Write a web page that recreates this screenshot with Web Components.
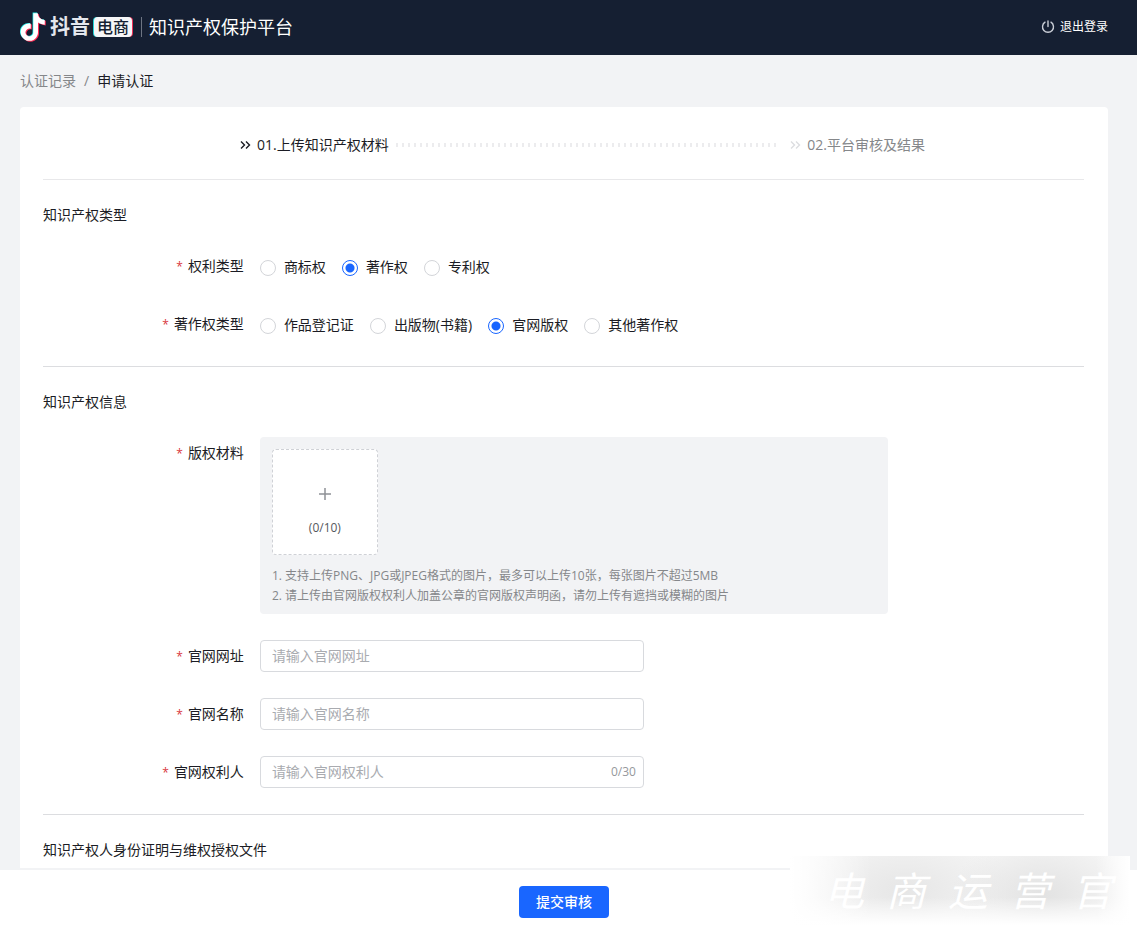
<!DOCTYPE html>
<html lang="zh-CN">
<head>
<meta charset="utf-8">
<meta name="viewport" content="width=device-width, initial-scale=1">
<title>知识产权保护平台</title>
<style>
  html, body { margin: 0; height: 100%; }
  body {
    font: 14px/22px "Open Sans", "Noto Sans CJK SC", sans-serif;
    color: #1b1c24;
    background: #f2f3f5;
  }
</style>
</head>
<body>
<ip-app>
  <ip-header slot="header"></ip-header>
  <ip-breadcrumb></ip-breadcrumb>
  <ip-card>
    <ip-steps></ip-steps>
    <ip-section heading="知识产权类型">
      <ip-radio-field label="权利类型" name="right" options="商标权,著作权,专利权" selected="1"></ip-radio-field>
      <ip-radio-field label="著作权类型" name="copyright" options="作品登记证,出版物(书籍),官网版权,其他著作权" selected="2"></ip-radio-field>
    </ip-section>
    <ip-section heading="知识产权信息">
      <ip-upload-field label="版权材料" count="(0/10)">
        <div>1. 支持上传PNG、JPG或JPEG格式的图片，最多可以上传10张，每张图片不超过5MB</div>
        <div>2. 请上传由官网版权权利人加盖公章的官网版权声明函，请勿上传有遮挡或模糊的图片</div>
      </ip-upload-field>
      <ip-text-field label="官网网址" placeholder="请输入官网网址"></ip-text-field>
      <ip-text-field label="官网名称" placeholder="请输入官网名称"></ip-text-field>
      <ip-text-field label="官网权利人" placeholder="请输入官网权利人" count="0/30"></ip-text-field>
    </ip-section>
    <ip-section heading="知识产权人身份证明与维权授权文件"></ip-section>
  </ip-card>
  <ip-submit-bar slot="footer">提交审核</ip-submit-bar>
  <ip-watermark slot="overlay" text="电商运营官"></ip-watermark>
</ip-app>

<script>
class Base extends HTMLElement {
  connectedCallback() {
    if (this.shadowRoot) return;
    this.attachShadow({ mode: "open" }).innerHTML =
      `<style>*{box-sizing:border-box}:host{display:block}</style>` + this.render();
  }
  attr(name) { return this.getAttribute(name) || ""; }
}

/* Row with a right-aligned label column and a control column. */
const fieldStyle = `
  .row { display: grid; grid-template-columns: calc(100% * 5 / 24) 1fr; align-items: start; }
  .label { padding-right: 16px; text-align: right; line-height: 32px; }
  .label::before { content: "*"; color: #d9363e; font-size: 12px; line-height: 1; margin-right: 5px; }
`;

customElements.define("ip-app", class extends Base {
  render() {
    return `<style>
      :host { display: flex; flex-direction: column; height: 100vh; position: relative; }
      main { flex: 1; min-height: 0; overflow: hidden auto; scrollbar-width: none; padding: 15px 29px 0 20px; }
    </style>
    <slot name="header"></slot><main><slot></slot></main><slot name="footer"></slot><slot name="overlay"></slot>`;
  }
});

customElements.define("ip-header", class extends Base {
  render() {
    const note = "M12.525.02c1.31-.02 2.61-.01 3.91-.02.08 1.53.63 3.09 1.75 4.17 1.12 1.11 2.7 1.62 4.24 1.79v4.03c-1.44-.05-2.89-.35-4.2-.97-.57-.26-1.1-.59-1.62-.93-.01 2.92.01 5.84-.02 8.75-.08 1.4-.54 2.79-1.35 3.94-1.31 1.92-3.58 3.17-5.91 3.21-1.43.08-2.86-.31-4.08-1.03-2.02-1.19-3.44-3.37-3.65-5.71-.02-.5-.03-1-.01-1.49.18-1.9 1.12-3.72 2.58-4.96 1.66-1.44 3.98-2.13 6.15-1.72.02 1.48-.04 2.96-.04 4.44-.99-.32-2.15-.23-3.02.37-.63.41-1.11 1.04-1.36 1.75-.21.51-.15 1.07-.14 1.61.24 1.64 1.82 3.02 3.5 2.87 1.12-.01 2.19-.66 2.77-1.61.19-.33.4-.67.41-1.06.1-1.79.06-3.57.07-5.36.01-4.03-.01-8.05.02-12.07z";
    return `<style>
      header { display: flex; align-items: center; height: 55px; padding: 0 29px 2px 20px; background: #151f32; color: #fff; }
      .mark { width: 26px; height: 30px; margin-right: 4px; }
      .brand { font-size: 20px; font-weight: 700; color: #e4e7ee; }
      .tag { margin-left: 4px; padding: 0 3px; border-radius: 4px; background: #f6f6f8; color: #151f32;
             font-size: 16px; line-height: 20px; font-weight: 500; box-shadow: -1px 0 #25d5d8, 1px 0 #ee3058; }
      .bar { width: 1px; height: 20px; margin: 0 7px 0 9px; background: #6d7482; }
      h1 { margin: 0; font-size: 18px; line-height: 26px; font-weight: 400; }
      a { display: flex; align-items: center; gap: 5px; margin-left: auto; color: #fff; font-size: 12px; text-decoration: none; }
    </style>
    <header>
      <svg class="mark" viewBox="1 -1 22.500 26" aria-hidden="true">
        <path d="${note}" fill="#25f4ee" transform="translate(-.6 -.5)"/>
        <path d="${note}" fill="#fe2c55" transform="translate(.9 .7)"/>
        <path d="${note}" fill="#fff"/>
      </svg>
      <span class="brand">抖音</span><span class="tag">电商</span>
      <span class="bar"></span>
      <h1>知识产权保护平台</h1>
      <a href="#logout">
        <svg width="14" height="14" viewBox="0 0 14 14" fill="none" stroke="#c9cdd6" stroke-width="1.4" stroke-linecap="round" aria-hidden="true">
          <path d="M4 2.200A5.500 5.500 0 1 0 10 2.200M7 1v5.500"/>
        </svg>退出登录</a>
    </header>`;
  }
});

customElements.define("ip-breadcrumb", class extends Base {
  render() {
    return `<style>
      nav { display: flex; gap: 8px; margin-bottom: 15px; color: #85878a; }
      a { color: inherit; text-decoration: none; }
      .now { color: #1b1c24; }
    </style>
    <nav aria-label="面包屑"><a href="#records">认证记录</a><span>/</span><span class="now">申请认证</span></nav>`;
  }
});

customElements.define("ip-card", class extends Base {
  render() {
    return `<style>:host { background: #fff; border-radius: 4px; padding: 0 24px 0 23px; }</style><slot></slot>`;
  }
});

customElements.define("ip-steps", class extends Base {
  render() {
    const chevrons = `<svg width="12" height="12" viewBox="0 0 12 12" fill="none" stroke="currentColor" stroke-width="1.4" aria-hidden="true"><path d="M2 2.500L5.500 6L2 9.500M7 2.500L10.500 6L7 9.500"/></svg>`;
    return `<style>
      ol { display: flex; align-items: center; margin: 0; list-style: none; padding: 27px 159px 23px 196px; border-bottom: 1px solid #e8e8ea; }
      li { display: flex; align-items: center; gap: 6px; white-space: nowrap; }
      .next { color: #85878a; }
      .next svg { color: #dcdde0; }
      .dots { flex: 1; height: 4px; margin: 0 12px 0 7px; background: repeating-linear-gradient(90deg, #ececee 0 2px, transparent 2px 6px); }
    </style>
    <ol>
      <li aria-current="step">${chevrons}<span>01.上传知识产权材料</span></li>
      <li class="dots" aria-hidden="true"></li>
      <li class="next">${chevrons}<span>02.平台审核及结果</span></li>
    </ol>`;
  }
});

customElements.define("ip-section", class extends Base {
  render() {
    return `<style>
      :host { padding: 24px 0 26px; border-bottom: 1px solid #dcdde0; }
      :host(:last-child) { border-bottom: 0; }
      h2 { margin: 0 0 24px; font: inherit; }
      .fields { display: grid; gap: 26px; }
    </style>
    <h2>${this.attr("heading")}</h2><div class="fields"><slot></slot></div>`;
  }
});

customElements.define("ip-radio-field", class extends Base {
  render() {
    const name = this.attr("name"), selected = Number(this.attr("selected"));
    const items = this.attr("options").split(",").map((text, i) =>
      `<label><input type="radio" name="${name}"${i === selected ? " checked" : ""}>${text}</label>`).join("");
    return `<style>${fieldStyle}
      .group { display: flex; flex-wrap: wrap; gap: 0 16px; line-height: 34px; }
      .row { height: 32px; }
      label { display: flex; align-items: center; gap: 8px; }
      input { appearance: none; width: 16px; height: 16px; margin: 2px 0 0; border: 1px solid #d3d5d9; border-radius: 50%; background: #fff; }
      input:checked { border-color: #1966ff; background: radial-gradient(circle, #1966ff 4px, #fff 5px); }
    </style>
    <div class="row"><div class="label" id="l">${this.attr("label")}</div>
      <div class="group" role="radiogroup" aria-labelledby="l">${items}</div></div>`;
  }
});

customElements.define("ip-upload-field", class extends Base {
  render() {
    return `<style>${fieldStyle}
      .panel { max-width: 628px; padding: 12px 12px 8px; border-radius: 4px; background: #f2f3f5; }
      .drop { display: flex; flex-direction: column; align-items: center; justify-content: center; gap: 16px; position: relative;
              width: 106px; height: 106px; padding-top: 22px; border: 1px dashed #cfd1d6; border-radius: 4px; background: #fff;
              color: #55585c; font-size: 12px; cursor: pointer; }
      input { position: absolute; inset: 0; width: 100%; height: 100%; margin: 0; opacity: 0; cursor: pointer; }
      .tips { margin-top: 11px; color: #85878a; font-size: 12px; line-height: 20px; }
    </style>
    <div class="row"><label class="label" for="f">${this.attr("label")}</label>
      <div class="panel">
        <div class="drop">
          <svg width="14" height="14" viewBox="0 0 14 14" stroke="#8f9196" stroke-width="1.500" aria-hidden="true"><path d="M7 1v12M1 7h12"/></svg>
          <span>${this.attr("count")}</span>
          <input id="f" type="file" accept="image/png,image/jpeg" multiple>
        </div>
        <div class="tips"><slot></slot></div>
      </div></div>`;
  }
});

customElements.define("ip-text-field", class extends Base {
  render() {
    const count = this.attr("count");
    return `<style>${fieldStyle}
      .box { display: flex; align-items: center; max-width: 384px; height: 32px; padding: 0 7px 0 11px; border: 1px solid #d8dade; border-radius: 4px; background: #fff; }
      .box:focus-within { border-color: #1966ff; }
      input { flex: 1; min-width: 0; height: 30px; padding: 0 0 1px; border: 0; outline: 0; background: none; font: inherit; color: inherit; }
      input::placeholder { color: #a9abb0; opacity: 1; }
      .count { color: #96989c; font-size: 12px; }
    </style>
    <div class="row"><label class="label" for="t">${this.attr("label")}</label>
      <div class="box"><input id="t" type="text" placeholder="${this.attr("placeholder")}">${count ? `<span class="count">${count}</span>` : ""}</div></div>`;
  }
});

customElements.define("ip-submit-bar", class extends Base {
  render() {
    return `<style>
      :host { padding: 16px 9px 11px 0; text-align: center; background: #fff; border-top: 2px solid #f2f3f5; }
      button { display: inline-block; vertical-align: top; height: 32px; padding: 0 17px; border: 0; border-radius: 4px; background: #1966ff;
               color: #fff; font: inherit; font-weight: 500; cursor: pointer; }
    </style>
    <button type="button"><slot></slot></button>`;
  }
});

customElements.define("ip-watermark", class extends Base {
  render() {
    return `<style>
      :host { position: absolute; right: 7px; bottom: 4px; pointer-events: none; }
      .plate { display: flex; align-items: center; justify-content: space-between; width: 340px; height: 69px; padding: 0 18px 0 34px;
        color: #fff; font-size: 40px; line-height: 60px; font-style: italic; font-weight: 400;
        background:
          linear-gradient(90deg, #fff, transparent 24%, transparent 90%, #fff),
          linear-gradient(transparent 60%, #fff),
          radial-gradient(ellipse 90px 60px at 74% 56%, #e2e2e2, transparent),
          radial-gradient(ellipse 110px 60px at 34% 50%, #e6e6e6, transparent),
          #f5f5f5; }
    </style>
    <div class="plate">${[...this.attr("text")].map(c => `<span>${c}</span>`).join("")}</div>`;
  }
});
</script>
</body>
</html>
